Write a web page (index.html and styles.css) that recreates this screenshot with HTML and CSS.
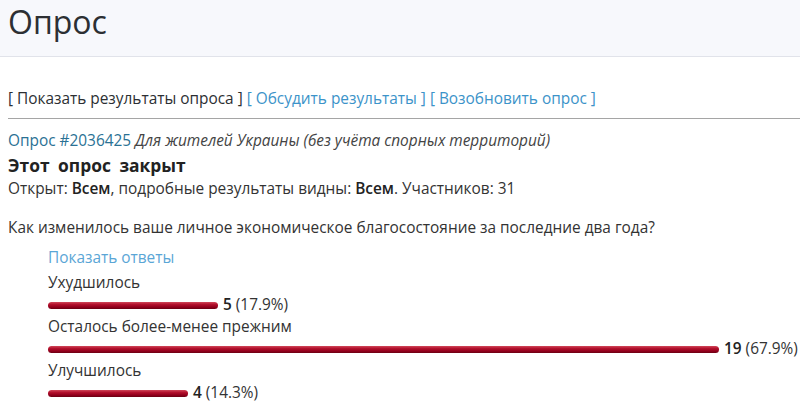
FILE: index.html
```html
<!DOCTYPE html>
<html lang="ru">
<head>
    <meta charset="UTF-8">
    <title>Опрос</title>
    <link rel="stylesheet" href="styles.css">
</head>
<body>
    <div class="page-head">
        <h1>Опрос</h1>
    </div>

    <div class="content">
        <div class="poll-actions">
            <span class="current">[ Показать результаты опроса ]</span>
            <a href="#">[ Обсудить результаты ]</a>
            <a href="#">[ Возобновить опрос ]</a>
        </div>
        <hr class="divider">

        <div class="poll">
            <div class="poll-title"><a href="#" class="poll-id">Опрос #2036425</a> <i>Для жителей Украины (без учёта спорных территорий)</i></div>
            <div class="poll-closed">Этот опрос закрыт</div>
            <div class="poll-meta">Открыт: <b>Всем</b>, подробные результаты видны: <b>Всем</b>. Участников: 31</div>

            <p class="question">Как изменилось ваше личное экономическое благосостояние за последние два года?</p>

            <div class="answers">
                <a href="#" class="show-answers">Показать ответы</a>

                <div class="answer">
                    <div class="answer-text">Ухудшилось</div>
                    <div class="answer-result">
                        <span class="bar" style="width: 170px"></span>
                        <span class="count"><b>5</b> (17.9%)</span>
                    </div>
                </div>
                <div class="answer">
                    <div class="answer-text">Осталось более-менее прежним</div>
                    <div class="answer-result">
                        <span class="bar" style="width: 671px"></span>
                        <span class="count"><b>19</b> (67.9%)</span>
                    </div>
                </div>
                <div class="answer">
                    <div class="answer-text">Улучшилось</div>
                    <div class="answer-result">
                        <span class="bar" style="width: 140px"></span>
                        <span class="count"><b>4</b> (14.3%)</span>
                    </div>
                </div>
            </div>
        </div>
    </div>
</body>
</html>
```

FILE: styles.css
```css
body {
    margin: 0;
    font-family: 'Open Sans', 'Liberation Sans', sans-serif;
    font-size: 15.4px;
    color: #333;
    background-color: #fff;
}
a {
    text-decoration: none;
}
.page-head {
    background-color: #f7f8fc;
    border-bottom: 1px solid #e1e3ea;
    height: 56px;
    padding-left: 8px;
}
.page-head h1 {
    margin: 0;
    font-size: 32px;
    font-weight: 400;
    line-height: 44px;
    color: #2c2f33;
}
.content {
    padding: 0 0 0 8px;
}
.poll-actions {
    margin-top: 30px;
    line-height: 24px;
}
.poll-actions .current {
    color: #2c2f33;
}
.poll-actions a {
    color: #3c93c9;
}
.divider {
    margin: 7px 0 10px;
    border: 0;
    border-top: 1px solid #a5a5a5;
}
.poll {
    line-height: 24px;
}
.poll-id {
    color: #2a7194;
}
.poll-title i {
    color: #444;
}
.poll-closed {
    font-weight: 700;
    font-size: 17.4px;
    word-spacing: 4px;
    color: #222;
}
.poll-meta b {
    font-weight: 600;
    color: #222;
}
.question {
    margin: 15px 0 0;
}
.answers {
    padding-left: 40px;
    margin-top: 6px;
}
.show-answers {
    display: block;
    color: #5aa6d6;
    margin-bottom: 3px;
}
.answer-text {
    line-height: 20px;
}
.answer-result {
    display: flex;
    align-items: center;
    gap: 5px;
    height: 24px;
}
.bar {
    display: block;
    height: 7px;
    border-radius: 4px;
    background: linear-gradient(#d1485a, #b3112d 35%, #95001d 70%, #6b0013);
}
.count b {
    font-weight: 600;
    color: #222;
}
```
